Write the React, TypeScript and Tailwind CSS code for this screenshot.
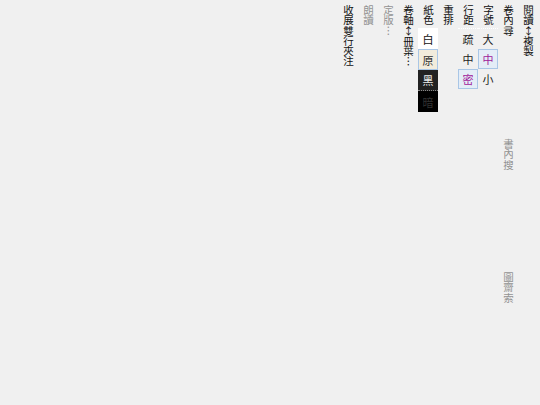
import React from "react";

const font = {
  fontFamily: '"Noto Sans CJK TC", "Noto Sans CJK SC", sans-serif',
};

type Opt = { label: string; cls: string };

const sizeOpts: Opt[] = [
  { label: "大", cls: "text-[#222]" },
  { label: "中", cls: "text-[#a0209a] bg-[#e4edf7] border border-[#a9c6e6]" },
  { label: "小", cls: "text-[#222]" },
];

const spacingOpts: Opt[] = [
  { label: "疏", cls: "text-[#222]" },
  { label: "中", cls: "text-[#222]" },
  { label: "密", cls: "text-[#a0209a] bg-[#e4edf7] border border-[#a9c6e6]" },
];

const paperOpts: Opt[] = [
  { label: "白", cls: "text-[#111] bg-white" },
  { label: "原", cls: "text-[#333] bg-[#f2ecdc] border border-[#a9c6e6]" },
  { label: "黑", cls: "text-[#eee] bg-[#222] border-b border-dotted border-[#888]" },
  { label: "暗", cls: "text-[#333] bg-black" },
];

// vertical label; "↕" kept upright like the reference
function Label({ text, gray }: { text: string; gray?: boolean }) {
  const parts = text.split("↕");
  return (
    <div
      className={`[writing-mode:vertical-rl] text-[10.5px] leading-[20px] tracking-[-0.3px] h-fit ${
        gray ? "text-[#939393]" : "text-[#111]"
      }`}
    >
      {parts.map((p, i) => (
        <React.Fragment key={i}>
          {i > 0 && <span className="[text-orientation:upright]">↕</span>}
          {p}
        </React.Fragment>
      ))}
    </div>
  );
}

function Options({
  items,
  divider,
  tall,
}: {
  items: Opt[];
  divider?: boolean;
  tall?: boolean;
}) {
  return (
    <div
      className={`flex flex-col w-[20px] mt-[3px] ${
        divider ? "border-t border-dotted border-white" : ""
      }`}
    >
      {items.map((o, i) => (
        <div
          key={i}
          className={`${tall ? "h-[21px]" : "h-[20px]"} w-[20px] flex items-center justify-center text-[11px] ${o.cls}`}
        >
          {o.label}
        </div>
      ))}
    </div>
  );
}

export default function App() {
  return (
    <div
      className="w-[540px] h-[405px] bg-[#f0f0f0] flex flex-row-reverse items-start pr-[2px] pt-[5px]"
      style={font}
    >
      <div className="w-[20px] flex flex-col items-center">
        <Label text="閱讀↕複製" />
      </div>
      <div className="w-[20px] flex flex-col items-center">
        <Label text="卷內尋" />
        <div className="mt-[103px]">
          <Label text="書內搜" gray />
        </div>
        <div className="mt-[103px]">
          <Label text="圖齋索" gray />
        </div>
      </div>
      <div className="w-[20px] flex flex-col items-center">
        <Label text="字號" />
        <Options items={sizeOpts} divider />
      </div>
      <div className="w-[20px] flex flex-col items-center">
        <Label text="行距" />
        <Options items={spacingOpts} divider />
      </div>
      <div className="w-[20px] flex flex-col items-center">
        <Label text="重排" />
      </div>
      <div className="w-[20px] flex flex-col items-center">
        <Label text="紙色" />
        <Options items={paperOpts} tall />
      </div>
      <div className="w-[20px] flex flex-col items-center">
        <Label text="卷軸↕冊葉…" />
      </div>
      <div className="w-[20px] flex flex-col items-center">
        <Label text="定版…" gray />
      </div>
      <div className="w-[20px] flex flex-col items-center">
        <Label text="朗讀" gray />
      </div>
      <div className="w-[20px] flex flex-col items-center">
        <Label text="收展雙行夾注" />
      </div>
    </div>
  );
}
